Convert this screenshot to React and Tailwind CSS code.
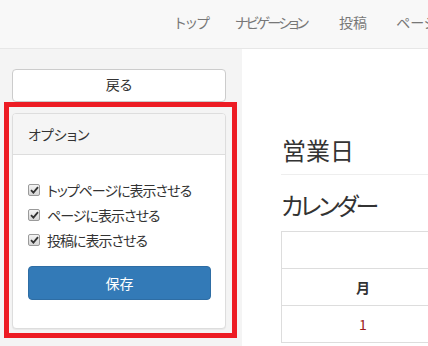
const font = {
  fontFamily: '"Noto Sans CJK JP", "Liberation Sans", sans-serif',
};

function Check({ label }) {
  return (
    <label className="flex h-[20px] items-center">
      <span className="mr-[7px] flex h-[12px] w-[12px] items-center justify-center rounded-[2px] border border-[#9a9a9a] bg-gradient-to-b from-[#f4f4f4] to-[#d6d6d6]">
        <svg width="9" height="8" viewBox="0 0 9 8">
          <path d="M1 4.2 L3.4 6.6 L8 1.2" fill="none" stroke="#333" strokeWidth="1.8" />
        </svg>
      </span>
      <span className="text-[14px] tracking-[-1px] text-[#333]">{label}</span>
    </label>
  );
}

export default function App() {
  const navItems = [
    { label: "トップ", cls: "w-[60px]" },
    { label: "ナビゲーション", cls: "w-[104px] tracking-[-2.5px]" },
    { label: "投稿", cls: "w-[57px]" },
    { label: "ページ", cls: "w-[60px]" },
  ];

  return (
    <div
      className="relative h-[346px] w-[428px] overflow-hidden bg-white [font-feature-settings:'palt']"
      style={font}
    >
      {/* Navbar */}
      <div className="flex h-[49px] border-b border-[#e7e7e7] bg-[#f8f8f8] pl-[175px]">
        {navItems.map((item) => (
          <div
            key={item.label}
            className={`${item.cls} shrink-0 pb-[3px] flex items-center whitespace-nowrap text-[14px] text-[#777]`}
          >
            {item.label}
          </div>
        ))}
      </div>

      <div className="flex">
        {/* Sidebar */}
        <div className="h-[297px] w-[242px] shrink-0 bg-[#f4f4f4] pl-[12px] pt-[20px]">
          <button className="flex h-[33px] w-[214px] items-center justify-center rounded-[4px] border border-[#ccc] bg-white pb-[2px] text-[14px] text-[#333]">
            戻る
          </button>

          <div className="mt-[11px] w-[214px] overflow-hidden rounded-[4px] border border-[#ddd] bg-white shadow-[0_1px_1px_rgba(0,0,0,0.05)]">
            <div className="flex h-[41px] items-center border-b border-[#ddd] bg-[#f5f5f5] px-[15px] text-[14px] text-[#333]">
              オプション
            </div>
            <div className="px-[15px] pb-[28px] pt-[25px]">
              <div className="flex flex-col gap-[5px]">
                <Check label="トップページに表示させる" />
                <Check label="ページに表示させる" />
                <Check label="投稿に表示させる" />
              </div>
              <button className="mt-[16px] flex h-[34px] w-[183px] items-center justify-center rounded-[4px] border border-[#2e6da4] bg-[#337ab7] text-[14px] text-white">
                保存
              </button>
            </div>
          </div>
        </div>

        {/* Main */}
        <div className="min-w-0 flex-1 pl-[39px] pt-[88px]">
          <div className="border-b border-[#eee] pb-[11px] text-[24px] leading-[26px] text-[#333]">
            <span className="pl-[1px]">営業日</span>
          </div>
          <div className="mt-[17px] text-[24px] leading-[26px] tracking-[-3px] text-[#333]">カレンダー</div>
          <table className="mt-[13px] w-[330px] border-collapse text-[14px] text-[#333]">
            <tbody>
              <tr>
                <td className="h-[37px] border border-[#ddd]" colSpan={2}></td>
              </tr>
              <tr>
                <th className="h-[37px] w-[163px] border border-[#ddd] text-center font-bold">月</th>
                <th className="h-[37px] border border-[#ddd]"></th>
              </tr>
              <tr>
                <td className="h-[37px] border border-[#ddd] text-center text-[#9b1c1c]">1</td>
                <td className="h-[37px] border border-[#ddd]"></td>
              </tr>
            </tbody>
          </table>
        </div>
      </div>

      {/* Red annotation frame */}
      <div className="pointer-events-none absolute left-[4px] top-[102px] h-[236px] w-[233px] border-[5px] border-[#ed1c24]"></div>
    </div>
  );
}
